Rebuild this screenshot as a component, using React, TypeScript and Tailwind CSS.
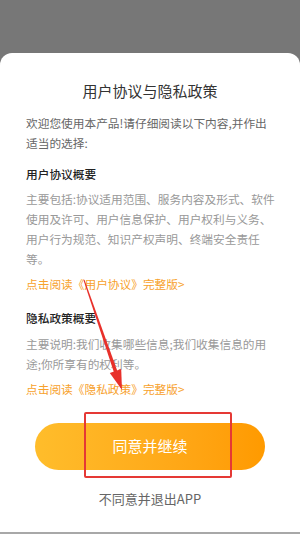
import React from "react";

export default function App() {
  const font = { fontFamily: '"Noto Sans CJK SC", "Noto Sans", sans-serif' };
  return (
    <div className="relative w-[300px] h-[534px] bg-[#777777] flex flex-col overflow-hidden" style={font}>
      <div className="h-[53px] shrink-0" />
      <div className="flex-1 bg-white rounded-t-[12px] flex flex-col pl-[26px] pr-[24px] pt-[28px]">
        <div className="text-center pr-[2px] text-[15px] leading-[20px] text-[#333333]">用户协议与隐私政策</div>
        <p className="mt-[12px] text-[11.7px] leading-[20px] text-[#666666]">
          欢迎您使用本产品!请仔细阅读以下内容,并作出适当的选择:
        </p>
        <div className="mt-[11px] text-[11.7px] leading-[20px] text-[#222222] font-medium">用户协议概要</div>
        <p className="mt-[5px] text-[11.7px] leading-[20px] text-[#999999]">
          主要包括:协议适用范围、服务内容及形式、软件使用及许可、用户信息保护、用户权利与义务、用户行为规范、知识产权声明、终端安全责任等。
        </p>
        <div className="mt-[5px] text-[11.7px] leading-[20px] text-[#f7a12b]">点击阅读《用户协议》完整版&gt;</div>
        <div className="mt-[14px] text-[11.7px] leading-[20px] text-[#222222] font-medium">隐私政策概要</div>
        <p className="mt-[6px] text-[11.7px] leading-[20px] text-[#999999]">
          主要说明:我们收集哪些信息;我们收集信息的用途;你所享有的权利等。
        </p>
        <div className="mt-[5px] text-[11.7px] leading-[20px] text-[#f7a12b]">点击阅读《隐私政策》完整版&gt;</div>
        <div className="mt-[24px] ml-[9px] mr-[11px] h-[47px] rounded-full bg-gradient-to-r from-[#ffbd2b] to-[#ff9a00] flex items-center justify-center text-white text-[15px]">
          同意并继续
        </div>
        <div className="mt-[19px] pr-[2px] text-center text-[13px] leading-[20px] text-[#666666]">不同意并退出APP</div>
      </div>
      <div className="h-[2px] shrink-0 bg-[#a8a8a8]" />

      <div className="absolute left-[84px] top-[412px] w-[148px] h-[66px] border-2 border-[#e53935] rounded-[2px]" />
      <svg className="absolute left-0 top-0" width="300" height="534" viewBox="0 0 300 534">
        <polygon points="83.5,280.2 84.5,279.8 117.5,371.5 114,372.5" fill="#e8302a" />
        <polygon points="122,390 109.8,373.1 121.2,369.1" fill="#e8302a" />
      </svg>
    </div>
  );
}
